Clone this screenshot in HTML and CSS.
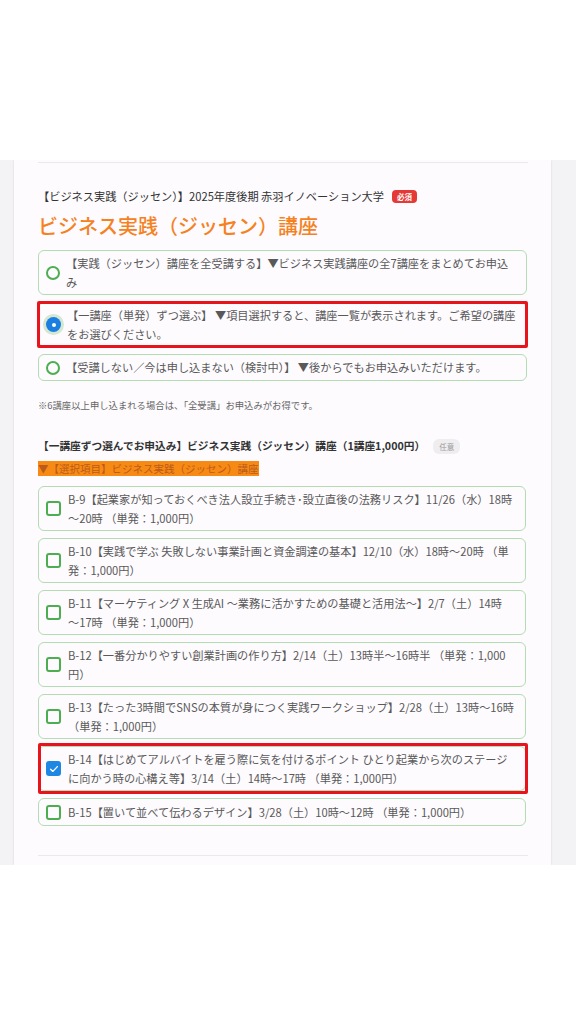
FILE: index.html
```html
<!DOCTYPE html>
<html lang="ja">
  <head>
    <meta charset="UTF-8" />
    <meta name="viewport" content="width=device-width, initial-scale=1.0" />
    <title>ビジネス実践（ジッセン）講座 申込</title>
    <link rel="stylesheet" href="styles.css">
  </head>
  <body>
    <div class="band">
      <div class="card">
        <div class="rule"></div>

        <div class="fieldTitle">
          【ビジネス実践（ジッセン）】2025年度後期 赤羽イノベーション大学
          <span class="badge required">必須</span>
        </div>
        <h1 class="heading">ビジネス実践（ジッセン）講座</h1>

        <div class="choices">
          <label class="choice">
            <span class="radio"></span>
            <span class="choiceText">【実践（ジッセン）講座を全受講する】▼ビジネス実践講座の全7講座をまとめてお申込み</span>
          </label>
          <label class="choice marked">
            <span class="radio checked"></span>
            <span class="choiceText">【一講座（単発）ずつ選ぶ】 ▼項目選択すると、講座一覧が表示されます。ご希望の講座をお選びください。</span>
          </label>
          <label class="choice">
            <span class="radio"></span>
            <span class="choiceText">【受講しない／今は申し込まない（検討中）】 ▼後からでもお申込みいただけます。</span>
          </label>
        </div>

        <p class="note">※6講座以上申し込まれる場合は、「全受講」お申込みがお得です。</p>

        <div class="sectionTitle">
          【一講座ずつ選んでお申込み】ビジネス実践（ジッセン）講座（1講座1,000円）
          <span class="badge optional">任意</span>
        </div>
        <div class="selectLabel"><span>▼【選択項目】ビジネス実践（ジッセン）講座</span></div>

        <div class="items">
          <label class="item">
            <span class="check"></span>
            <span class="itemText">B-9【起業家が知っておくべき法人設立手続き･設立直後の法務リスク】11/26（水）18時～20時 （単発：1,000円）</span>
          </label>
          <label class="item">
            <span class="check"></span>
            <span class="itemText">B-10【実践で学ぶ 失敗しない事業計画と資金調達の基本】12/10（水）18時～20時 （単発：1,000円）</span>
          </label>
          <label class="item">
            <span class="check"></span>
            <span class="itemText">B-11【マーケティング X 生成AI ～業務に活かすための基礎と活用法～】2/7（土）14時<span class="nobr">～17時</span> （単発：1,000円）</span>
          </label>
          <label class="item">
            <span class="check"></span>
            <span class="itemText">B-12【一番分かりやすい創業計画の作り方】2/14（土）13時半～16時半 （単発：1,000円）</span>
          </label>
          <label class="item">
            <span class="check"></span>
            <span class="itemText">B-13【たった3時間でSNSの本質が身につく実践ワークショップ】2/28（土）13時～16時 （単発：1,000円）</span>
          </label>
          <label class="item marked wide">
            <span class="check checked">
              <svg viewBox="0 0 16 16" width="12" height="12"><path d="M3.5 8.2l3 3 6-6.4" fill="none" stroke="#fff" stroke-width="1.8" stroke-linecap="round" stroke-linejoin="round"/></svg>
            </span>
            <span class="itemText">B-14【はじめてアルバイトを雇う際に気を付けるポイント ひとり起業から次のステージに向かう時の心構え等】3/14（土）14時～17時 （単発：1,000円）</span>
          </label>
          <label class="item">
            <span class="check"></span>
            <span class="itemText">B-15【置いて並べて伝わるデザイン】3/28（土）10時～12時 （単発：1,000円）</span>
          </label>
        </div>

        <div class="rule bottom"></div>
      </div>
    </div>
  </body>
</html>
```

FILE: styles.css
```css
body {
  margin: 0;
  background: #fff;
  font-family: "Noto Sans CJK JP", "Noto Sans", sans-serif;
  color: #555;
}
.band {
  margin-top: 160px;
  height: 705px;
  background: #f3f2f4;
  padding-left: 14px;
  overflow: hidden;
}
.card {
  width: 537px;
  height: 705px;
  box-sizing: border-box;
  background: #fdfbfe;
  box-shadow: 0 0 2px rgba(0, 0, 0, 0.12);
  padding: 2px 23px 0 24px;
}
.rule {
  height: 1px;
  background: #ebe9ec;
}
.rule.bottom {
  margin-top: 29px;
}
.fieldTitle {
  margin-top: 25px;
  font-size: 11.2px;
  line-height: 16px;
  color: #333;
  font-weight: 400;
  display: flex;
  align-items: center;
  gap: 8px;
}
.badge {
  display: inline-block;
  font-size: 7.5px;
  line-height: 13px;
  padding: 0 5px;
  border-radius: 4px;
  font-weight: 700;
}
.required {
  background: #e53935;
  color: #fff;
}
.optional {
  background: #efedf0;
  color: #999;
  font-weight: 400;
  line-height: 15px;
  padding: 0 6px;
  border-radius: 6px;
}
.heading {
  margin: 8px 0 0;
  font-size: 20px;
  line-height: 28px;
  font-weight: 500;
  color: #f5821f;
}
.choices {
  margin-top: 10px;
  display: flex;
  flex-direction: column;
  gap: 7px;
  padding-right: 1px;
}
.choice,
.item {
  position: relative;
  display: flex;
  align-items: center;
  gap: 6px;
  border: 1px solid #b3dcb3;
  border-radius: 6px;
  padding: 3px 10px 3px 7px;
  font-size: 11.2px;
  line-height: 18.5px;
  color: #595959;
  background: #fdfbfe;
  min-height: 19px;
}
.marked::after {
  content: "";
  position: absolute;
  inset: -2px;
  border: 3px solid #e8141b;
  border-radius: 2px;
  pointer-events: none;
}
.marked.wide::after {
  inset: -4px -3px -4px -1px;
}
.radio {
  flex: none;
  width: 14px;
  height: 14px;
  box-sizing: border-box;
  border: 2px solid #4cae50;
  border-radius: 50%;
}
.radio.checked {
  border: none;
  width: 15px;
  height: 15px;
  background: #1a7fe0;
  box-shadow: 0 0 0 3px #d3e7d1;
  position: relative;
}
.radio.checked::after {
  content: "";
  position: absolute;
  left: 5.5px;
  top: 5.5px;
  width: 4px;
  height: 4px;
  border-radius: 50%;
  background: #fff;
}
.note {
  margin: 17px 0 0;
  font-size: 9.35px;
  line-height: 14px;
  color: #666;
}
.sectionTitle {
  margin-top: 26px;
  font-size: 10.7px;
  line-height: 16px;
  font-weight: 700;
  color: #333;
  display: flex;
  align-items: center;
  gap: 8px;
}
.sectionTitle .badge {
  font-size: 7.5px;
}
.selectLabel {
  margin-top: 8px;
  font-size: 10.5px;
  line-height: 14px;
}
.selectLabel span {
  background: #f78a14;
  color: #bb5a1c;
}
.items {
  margin-top: 10px;
  display: flex;
  flex-direction: column;
  gap: 7px;
  padding-right: 2px;
}
.item {
  gap: 7px;
  padding-right: 9px;
  min-height: 20px;
}
.nobr {
  white-space: nowrap;
}
.check {
  flex: none;
  width: 15px;
  height: 15px;
  box-sizing: border-box;
  border: 2px solid #4cae50;
  border-radius: 3px;
  display: flex;
  align-items: center;
  justify-content: center;
}
.check.checked {
  border: none;
  background: #1e86e3;
}
```
